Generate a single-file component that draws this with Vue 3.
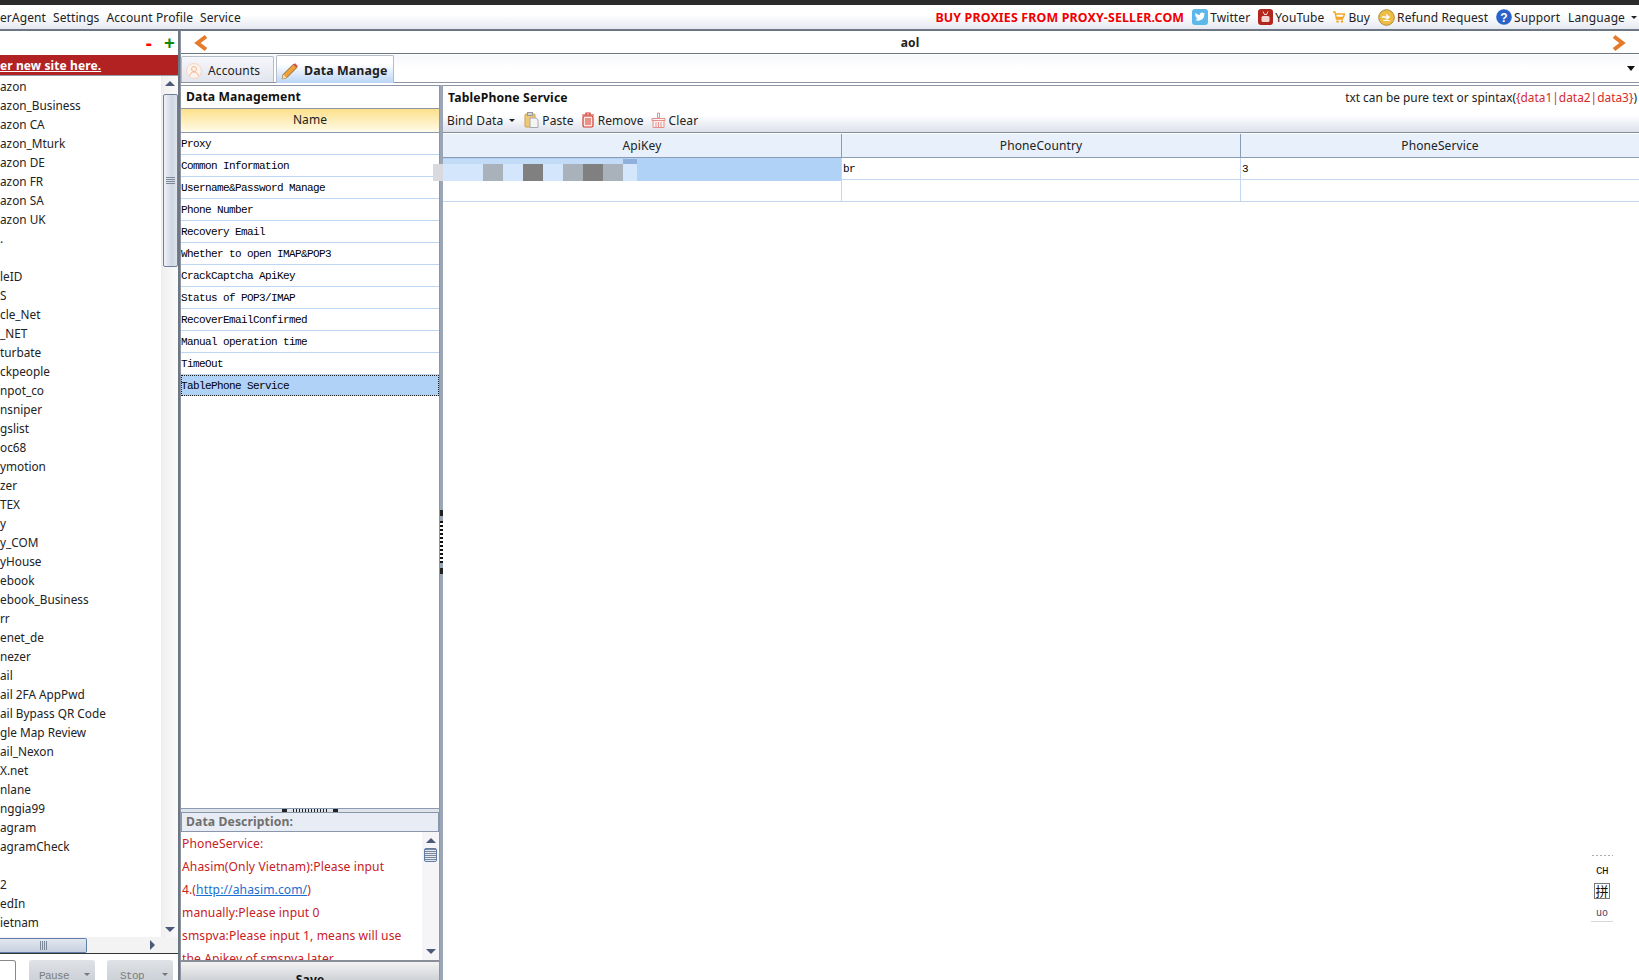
<script setup>
// Data Manage view of the account tool: site list on the left, data table on the right.
const sites = [
  'azon', 'azon_Business', 'azon CA', 'azon_Mturk', 'azon DE', 'azon FR', 'azon SA', 'azon UK', '.', '',
  'leID', 'S', 'cle_Net', '_NET', 'turbate', 'ckpeople', 'npot_co', 'nsniper', 'gslist', 'oc68',
  'ymotion', 'zer', 'TEX', 'y', 'y_COM', 'yHouse', 'ebook', 'ebook_Business', 'rr', 'enet_de',
  'nezer', 'ail', 'ail 2FA AppPwd', 'ail Bypass QR Code', 'gle Map Review', 'ail_Nexon', 'X.net', 'nlane', 'nggia99', 'agram',
  'agramCheck', '', '2', 'edIn', 'ietnam',
];

const dataNames = [
  'Proxy', 'Common Information', 'Username&Password Manage', 'Phone Number', 'Recovery Email',
  'Whether to open IMAP&POP3', 'CrackCaptcha ApiKey', 'Status of POP3/IMAP', 'RecoverEmailConfirmed',
  'Manual operation time', 'TimeOut', 'TablePhone Service',
];

// mosaic over the blurred api key
const mosaic = [
  [10, '#d8dadf'], [40, '#d3e6fb'], [20, '#a9b1ba'], [20, '#d3e6fb'], [20, '#808080'],
  [20, '#d3e6fb'], [20, '#a9b1ba'], [20, '#808080'], [20, '#a9b1ba'], [14, '#d3e6fb'],
];
</script>

<template>
  <div class="app">
    <div class="topline"></div>

    <header class="menubar">
      <span>erAgent</span>
      <span>Settings</span>
      <span>Account Profile</span>
      <span>Service</span>
      <span class="m-right">
        <b class="promo">BUY PROXIES FROM PROXY-SELLER.COM</b>
        <span class="ic-item">
          <svg width="16" height="16" viewBox="0 0 16 16"><rect width="16" height="16" rx="3" fill="#5cb8ea"/><path d="M13 4.600c-.4.2-.8.3-1.200.3.4-.3.8-.7.9-1.200-.4.2-.9.4-1.300.5a2.100 2.100 0 0 0-3.600 1.900C6.100 6 4.500 5.100 3.500 3.800c-.6 1-.3 2.200.6 2.800-.3 0-.6-.1-.9-.3 0 1 .7 1.900 1.700 2.100-.3.1-.6.1-.9 0 .3.800 1 1.400 1.900 1.400A4.200 4.200 0 0 1 3 10.700a6 6 0 0 0 9.200-5.300c.3-.2.600-.5.800-.8z" fill="#fff"/></svg>
          Twitter
        </span>
        <span class="ic-item">
          <svg width="15" height="16" viewBox="0 0 15 16"><rect width="15" height="16" rx="3" fill="#b3261e"/><rect x="3.500" y="7" width="8" height="6" rx="1.500" fill="#f3d6d2"/><path d="M5 2.500l1.500 3M10 2.500L8.500 5.500M6 5.500h3" stroke="#f3d6d2" fill="none"/></svg>
          YouTube
        </span>
        <span class="ic-item">
          <svg width="14" height="14" viewBox="0 0 14 14"><path d="M1 2h2l1.500 7h6.500M3.500 4h9l-1.200 3.500H4.300" fill="none" stroke="#f6a623" stroke-width="1.400"/><circle cx="5.500" cy="11.500" r="1.200" fill="#f6a623"/><circle cx="10" cy="11.500" r="1.200" fill="#f6a623"/></svg>
          Buy
        </span>
        <span class="ic-item">
          <svg width="17" height="17" viewBox="0 0 17 17"><circle cx="8.500" cy="8.500" r="7.800" fill="#eebd45" stroke="#a98a3c"/><path d="M4 8h7M8 5.500L11 8l-3 2.500" fill="none" stroke="#fff" stroke-width="1.500"/><path d="M5.500 11.500h6" stroke="#fff"/></svg>
          Refund Request
        </span>
        <span class="ic-item">
          <svg width="16" height="16" viewBox="0 0 16 16"><circle cx="8" cy="8" r="7.800" fill="#2a62c9"/><text x="8" y="12.500" text-anchor="middle" class="q">?</text></svg>
          Support
        </span>
        <span class="lang">Language <i class="caret"></i></span>
      </span>
    </header>

    <div class="body">
      <aside class="left">
        <div class="addbar"><b class="minus">-</b><b class="plus">+</b></div>
        <div class="banner"><u>er new site here.</u></div>

        <div class="list-wrap">
          <ul class="sites">
            <li v-for="(s, i) in sites" :key="i">{{ s }}</li>
          </ul>
          <div class="vscroll">
            <i class="arr up"></i>
            <div class="vthumb"><span class="grip"></span></div>
            <i class="arr down"></i>
          </div>
        </div>

        <div class="hscroll">
          <div class="hthumb"><span class="hgrip"></span></div>
          <i class="arr right"></i>
        </div>

        <div class="actions">
          <div class="btn-white"></div>
          <div class="btn-off">Pause<i class="caret small"></i></div>
          <div class="btn-off">Stop<i class="caret small"></i></div>
        </div>
      </aside>

      <main class="right">
        <div class="navbar">
          <svg width="16" height="18" viewBox="0 0 16 18"><path d="M13 2.500L4.500 9l8.500 6.500" fill="none" stroke="#e57a2c" stroke-width="4"/></svg>
          <b>aol</b>
          <svg width="16" height="18" viewBox="0 0 16 18"><path d="M3 2.500L11.500 9 3 15.500" fill="none" stroke="#e57a2c" stroke-width="4"/></svg>
        </div>

        <div class="tabs">
          <div class="tab">
            <svg width="16" height="16" viewBox="0 0 16 16"><circle cx="8" cy="8" r="7.500" fill="#fbf3ee" stroke="#f4d6c2"/><circle cx="8" cy="6" r="2.500" fill="none" stroke="#f3b58e"/><path d="M3.500 13c.5-3 2.500-4 4.500-4s4 1 4.500 4" fill="none" stroke="#f3b58e"/></svg>
            Accounts
          </div>
          <div class="tab active">
            <svg width="18" height="18" viewBox="0 0 16 16"><path d="M1 15l1-4L11 2l3 3-9 9z" fill="#eea13a" stroke="#8a5a20" stroke-width=".8"/><path d="M11 2l3 3 1-1.500L12.500 1z" fill="#d9534f"/><path d="M1 15l1-4 3 3z" fill="#f6dcb5"/></svg>
            Data Manage
          </div>
          <i class="caret dark"></i>
        </div>

        <div class="panes">
          <section class="data-pane">
            <div class="pane-title">Data Management</div>
            <div class="name-head">Name</div>
            <div class="name-list">
              <div
                v-for="(n, i) in dataNames"
                :key="n"
                class="name-row"
                :class="{ sel: i === dataNames.length - 1 }"
              >{{ n }}</div>
            </div>
            <div class="hsplit"><i></i><span></span><i></i></div>
            <div class="desc-head">Data Description:</div>
            <div class="desc">
              <div class="desc-text">
                <p>PhoneService:</p>
                <p>Ahasim(Only Vietnam):Please input</p>
                <p>4.(<a>http://ahasim.com/</a>)</p>
                <p>manually:Please input 0</p>
                <p>smspva:Please input 1, means will use</p>
                <p>the Apikey of smspva later</p>
              </div>
              <div class="desc-scroll">
                <i class="arr up"></i>
                <div class="dthumb"></div>
                <i class="arr down"></i>
              </div>
            </div>
            <div class="save"><b>Save</b></div>
          </section>

          <div class="vsplit"><i class="tri"></i><span></span><i class="tri"></i></div>

          <section class="table-pane">
            <div class="title-row">
              <b>TablePhone Service</b>
              <span class="hint">txt can be pure text or spintax(<em>{data1|data2|data3}</em>)</span>
            </div>
            <div class="toolbar">
              <span class="tool bind">Bind Data <i class="caret"></i></span>
              <span class="tool">
                <svg width="15" height="16" viewBox="0 0 15 16"><rect x="1" y="2" width="10" height="13" rx="1" fill="#f0c878" stroke="#c9a24f"/><rect x="3.500" y="0.500" width="5" height="3" fill="#d6d6d6" stroke="#999"/><path d="M6 6h6l2 2v7.500H6z" fill="#f4f4f6" stroke="#aaa"/></svg>
                Paste
              </span>
              <span class="tool">
                <svg width="14" height="16" viewBox="0 0 14 16"><path d="M1 3h12M5 3V1h4v2" fill="none" stroke="#d33a2c" stroke-width="1.200"/><rect x="2" y="4" width="10" height="11" rx="1.500" fill="#fbe9e7" stroke="#d33a2c" stroke-width="1.200"/><path d="M5 6v7M7 6v7M9 6v7" stroke="#d33a2c"/></svg>
                Remove
              </span>
              <span class="tool">
                <svg width="15" height="16" viewBox="0 0 15 16"><path d="M6.500 1h2v5h-2z" fill="none" stroke="#e58f8a"/><path d="M1 6.500h13v2H1zM2 8.500h11v7H2z" fill="#fdf1f0" stroke="#e58f8a"/><path d="M5 10v5M7.500 10v5M10 10v5" stroke="#e58f8a"/></svg>
                Clear
              </span>
            </div>

            <div class="grid-head">
              <div>ApiKey</div>
              <div>PhoneCountry</div>
              <div>PhoneService</div>
            </div>
            <div class="grid-row first">
              <div class="cell sel"></div>
              <div class="cell">br</div>
              <div class="cell">3</div>
            </div>
            <div class="grid-row">
              <div class="cell"></div>
              <div class="cell"></div>
              <div class="cell"></div>
            </div>

            <div class="mosaic">
              <div class="mosaic-top"><span></span><span></span></div>
              <div class="mosaic-row">
                <span
                  v-for="(m, i) in mosaic"
                  :key="i"
                  :style="{ width: m[0] + 'px', background: m[1] }"
                ></span>
              </div>
            </div>
          </section>
        </div>
      </main>
    </div>

    <div class="ime">
      <div class="ime-dots"></div>
      <div class="ime-ch">CH</div>
      <div class="ime-box">拼</div>
      <div class="ime-uo"><span>u</span><span>o</span></div>
    </div>
  </div>
</template>

<style scoped>
.app {
  position: relative;
  width: 1639px;
  height: 980px;
  overflow: hidden;
  background: #fff;
  color: #222;
  font: 12px "Noto Sans", "Open Sans", sans-serif;
  letter-spacing: .1px;
  display: flex;
  flex-direction: column;
}
.topline { height: 5px; background: #2b2b2b; flex: none; }
b { letter-spacing: .15px; }

.menubar {
  height: 24px;
  flex: none;
  display: flex;
  align-items: center;
  gap: 7px;
  background: linear-gradient(#fff, #fff 40%, #e6e9f2);
  border-bottom: 2px solid #6d7683;
  white-space: nowrap;
}
.m-right { margin-left: auto; display: flex; align-items: center; gap: 8px; padding-right: 2px; }
.promo { color: #f00000; font-size: 12.400px; }
.ic-item { display: inline-flex; align-items: center; gap: 2px; }
.q { font: bold 12px "Liberation Sans", sans-serif; fill: #fff; }
.lang { display: inline-flex; align-items: center; gap: 6px; margin-left: 0; }
.caret {
  display: inline-block;
  width: 0;
  height: 0;
  border-left: 3px solid transparent;
  border-right: 3px solid transparent;
  border-top: 3px solid #222;
}

.body { flex: 1; display: flex; min-height: 0; }

/* left column */
.left {
  width: 178px;
  flex: none;
  display: flex;
  flex-direction: column;
  border-right: 2px solid #6d7683;
}
.addbar {
  height: 24px;
  flex: none;
  display: flex;
  justify-content: flex-end;
  align-items: center;
  gap: 12px;
  padding: 1px 3px 0 0;
  box-sizing: border-box;
  font-size: 19px;
  line-height: 1;
}
.minus { color: #f00; }
.plus { color: #0a8a0a; }
.banner {
  height: 20px;
  flex: none;
  background: #b22222;
  color: #fff;
  font-weight: 700;
  line-height: 21px;
  border-bottom: 1px solid #9aa0a8;
}
.list-wrap { flex: 1; display: flex; min-height: 0; }
.sites {
  flex: 1;
  margin: 0;
  padding: 1px 0 0;
  list-style: none;
  overflow: hidden;
  border-right: 1px solid #ececec;
  font-size: 11.800px;
  letter-spacing: 0;
}
.sites li { height: 19px; line-height: 19px; white-space: nowrap; }
.vscroll {
  width: 16px;
  flex: none;
  display: flex;
  flex-direction: column;
  align-items: center;
  background: linear-gradient(90deg, #f0f0f0, #fafafa);
  padding: 5px 0;
  box-sizing: border-box;
}
.vthumb {
  width: 15px;
  height: 173px;
  margin-top: 8px;
  box-sizing: border-box;
  border: 1px solid #6f7f98;
  border-radius: 2px;
  background: linear-gradient(90deg, #eef1f6, #cfd7e3 60%, #dfe4ec);
  display: flex;
  align-items: center;
  justify-content: center;
}
.grip {
  width: 9px;
  height: 7px;
  background: repeating-linear-gradient(#7c8798 0 1px, transparent 1px 2px);
}
.arr { display: block; width: 0; height: 0; flex: none; }
.arr.up {
  border-left: 5px solid transparent;
  border-right: 5px solid transparent;
  border-bottom: 5px solid #4a5a78;
}
.arr.down {
  margin-top: auto;
  border-left: 5px solid transparent;
  border-right: 5px solid transparent;
  border-top: 5px solid #4a5a78;
}
.arr.right {
  border-top: 5px solid transparent;
  border-bottom: 5px solid transparent;
  border-left: 5px solid #4a5a78;
  margin-left: 63px;
}
.hscroll {
  height: 16px;
  flex: none;
  display: flex;
  align-items: center;
  background: #f3f3f3;
  border-bottom: 1px solid #333;
}
.hthumb {
  width: 87px;
  height: 15px;
  box-sizing: border-box;
  border: 1px solid #5f7ea8;
  border-left: 0;
  border-radius: 0 2px 2px 0;
  background: linear-gradient(#e3e8f0, #c6d0de);
  display: flex;
  justify-content: center;
  align-items: center;
}
.hgrip { width: 7px; height: 9px; background: repeating-linear-gradient(90deg, #7c8798 0 1px, transparent 1px 2px); }
.actions {
  height: 26px;
  flex: none;
  display: flex;
  gap: 12px;
  padding-top: 6px;
  box-sizing: border-box;
  overflow: hidden;
}
.btn-white {
  width: 16px;
  height: 30px;
  box-sizing: border-box;
  border: 1px solid #888;
  border-left: 0;
  border-radius: 0 3px 0 0;
  background: #fff;
}
.btn-off {
  width: 66px;
  height: 30px;
  box-sizing: border-box;
  padding-right: 16px;
  border-radius: 3px 3px 0 0;
  background: linear-gradient(#dfe2e6, #c3c9d1);
  color: #7d7d7d;
  font: 11px/32px "Liberation Mono", monospace;
  letter-spacing: -.6px;
  text-align: center;
  position: relative;
}
.btn-white + .btn-off { margin-left: 1px; }
.caret.small { position: absolute; right: 5px; top: 13px; border-top-color: #777; }

/* right column */
.right { flex: 1; display: flex; flex-direction: column; min-width: 0; border-left: 1px solid #8d95a3; }
.navbar {
  height: 22px;
  flex: none;
  display: flex;
  justify-content: space-between;
  align-items: center;
  padding: 1px 12px 0 12px;
  box-sizing: content-box;
  height: 21px;
  border-bottom: 1px solid #6d7683;
}
.tabs {
  height: 27px;
  flex: none;
  margin-top: 1px;
  display: flex;
  align-items: flex-end;
  gap: 2px;
  background: linear-gradient(#f7f8fb, #fff 50%);
  border-bottom: 1px solid #8d95a3;
  position: relative;
}
.tab {
  width: 93px;
  height: 26px;
  box-sizing: border-box;
  display: flex;
  align-items: center;
  gap: 6px;
  padding: 2px 0 0 4px;
  border: 1px solid #b5bcc9;
  border-bottom: 0;
  border-radius: 2px 2px 0 0;
  background: linear-gradient(#f6f7fb, #e2e5ee);
}
.tab.active {
  width: 118px;
  height: 28px;
  margin-bottom: -1px;
  font-size: 12.400px;
  font-weight: 700;
  padding: 2px 0 0 4px;
  gap: 5px;
  background: linear-gradient(#fff 30%, #bad5f6);
}
.caret.dark {
  position: absolute;
  right: 4px;
  top: 11px;
  border-left-width: 4px;
  border-right-width: 4px;
  border-top: 5px solid #111;
}
.panes { flex: 1; display: flex; min-height: 0; margin-top: 2px; }

.data-pane {
  width: 258px;
  flex: none;
  display: flex;
  flex-direction: column;
  border-right: 1px solid #8a97ab;
}
.pane-title {
  height: 24px;
  flex: none;
  line-height: 22px;
  padding-left: 5px;
  font-size: 12.200px;
  font-weight: 700;
  color: #111;
  border-top: 1px solid #8d95a3;
  border-bottom: 1px solid #8d95a3;
  box-sizing: border-box;
}
.name-head {
  height: 24px;
  flex: none;
  box-sizing: border-box;
  line-height: 22px;
  text-align: center;
  background: linear-gradient(#fde08a, #fffbe9);
  border-bottom: 1px solid #8a9bb4;
}
.name-list {
  flex: 1;
  border-bottom: 1px solid #8a9bb4;
  min-height: 0;
}
.name-row {
  height: 21px;
  border-bottom: 1px solid #bcd6f3;
  font: 11px/23px "Liberation Mono", monospace;
  letter-spacing: -.6px;
  color: #000;
  white-space: nowrap;
}
.name-row.sel {
  background: #afd2f6;
  outline: 1px dotted #222;
  outline-offset: -1px;
  border-bottom: 0;
}
.hsplit {
  height: 3px;
  flex: none;
  display: flex;
  justify-content: center;
  align-items: center;
  gap: 6px;
  background: #dfe3ea;
}
.hsplit i { width: 5px; height: 3px; background: #222; }
.hsplit span { width: 34px; height: 3px; background: repeating-linear-gradient(90deg, #222 0 1px, transparent 1px 3px); }
.desc-head {
  height: 20px;
  flex: none;
  box-sizing: border-box;
  line-height: 18px;
  padding-left: 4px;
  font-size: 12.200px;
  font-weight: 700;
  color: #6f6f6f;
  background: #e8ecf4;
  border: 1px solid #8a97ab;
}
.desc {
  height: 130px;
  flex: none;
  display: flex;
  overflow: hidden;
  border-bottom: 2px solid #8a8f97;
  box-sizing: border-box;
}
.desc-text { flex: 1; padding-left: 1px; color: #c8201e; line-height: 23px; font-size: 12.100px; }
.desc-text p { margin: 0; white-space: nowrap; }
.desc-text a { color: #1a6fd0; text-decoration: underline; }
.desc-scroll {
  width: 17px;
  flex: none;
  display: flex;
  flex-direction: column;
  align-items: center;
  padding: 6px 0;
  box-sizing: border-box;
  background: #f5f5f7;
}
.dthumb {
  width: 13px;
  height: 14px;
  margin-top: 5px;
  box-sizing: border-box;
  border: 1px solid #5f7ea8;
  border-radius: 2px;
  background: repeating-linear-gradient(#7c8798 0 1px, #e6eaf0 1px 2px);
}
.save {
  height: 18px;
  flex: none;
  text-align: center;
  background: linear-gradient(#f3f3f3, #cfd2d6);
  color: #111;
  line-height: 36px;
  overflow: hidden;
}

.vsplit {
  width: 3px;
  flex: none;
  padding-top: 18px;
  box-sizing: border-box;
  background: #9aa6b6;
  display: flex;
  flex-direction: column;
  align-items: center;
  justify-content: center;
}
.vsplit span { width: 3px; height: 42px; margin: 5px 0; background: repeating-linear-gradient(#111 0 2px, #fff 2px 4px); }
.vsplit .tri { width: 3px; height: 6px; background: #222; }

.table-pane { flex: 1; min-width: 0; position: relative; display: flex; flex-direction: column; }
.title-row {
  height: 23px;
  flex: none;
  display: flex;
  justify-content: space-between;
  align-items: center;
  padding: 0 2px 0 5px;
  box-sizing: border-box;
  border-top: 1px solid #8d95a3;
  white-space: nowrap;
}
.title-row b { color: #111; font-size: 12.200px; }
.hint { font-size: 11.900px; letter-spacing: 0; }
.title-row em { font-style: normal; color: #d32a2a; }
.toolbar {
  height: 25px;
  flex: none;
  display: flex;
  align-items: center;
  gap: 7px;
  padding-left: 4px;
  box-sizing: border-box;
  background: linear-gradient(#fff 30%, #dde1ec);
  border-bottom: 1px solid #838c9a;
}
.tool { display: inline-flex; align-items: center; gap: 3px; }
.tool.bind { gap: 6px; margin-right: 2px; }
.grid-head, .grid-row { display: grid; grid-template-columns: 398px 399px 1fr; }
.grid-head {
  height: 24px;
  flex: none;
  box-sizing: border-box;
  margin-top: 1px;
  background: #e7f0fb;
  border-bottom: 1px solid #8a9bb4;
  line-height: 23px;
  text-align: center;
}
.grid-head div + div { border-left: 1px solid #8a9bb4; }
.grid-row { height: 22px; box-sizing: border-box; border-bottom: 1px solid #c3d7ef; }
.cell {
  font: 11px/23px "Liberation Mono", monospace;
  letter-spacing: -.6px;
  padding-left: 1px;
  color: #000;
}
.cell + .cell { border-left: 1px solid #c3d7ef; }
.cell.sel { background: #afd2f6; }

/* blurred key, sits over the first cell and pokes out into the left pane */
.mosaic {
  position: absolute;
  left: -10px;
  top: 74px;
  width: 204px;
}
.mosaic-top { display: flex; height: 5px; padding-left: 10px; }
.mosaic-top span:first-child { width: 180px; background: #c2dcf8; }
.mosaic-top span:last-child { width: 14px; background: #8fb0dd; }
.mosaic-row { display: flex; height: 17px; }

.ime {
  position: absolute;
  left: 1591px;
  top: 855px;
  width: 22px;
  height: 66px;
  background: #fff;
  border-bottom: 1px solid #d8d8d8;
  display: flex;
  flex-direction: column;
  align-items: center;
}
.ime-dots { width: 21px; height: 1px; background: repeating-linear-gradient(90deg, #aaa 0 2px, transparent 2px 4px); }
.ime-ch { margin-top: 9px; font: 11px/12px "Liberation Mono", monospace; letter-spacing: -.5px; color: #111; }
.ime-box {
  margin-top: 6px;
  width: 16px;
  height: 16px;
  box-sizing: border-box;
  border: 1px solid #777;
  font: 13px/14px "Noto Sans CJK SC", sans-serif;
  letter-spacing: 0;
  text-align: center;
  color: #111;
}
.ime-uo { margin-top: 9px; font: 10px/12px "Liberation Mono", monospace; color: #446; display: flex; }
</style>

<style>
html, body { margin: 0; overflow: hidden; }
</style>
